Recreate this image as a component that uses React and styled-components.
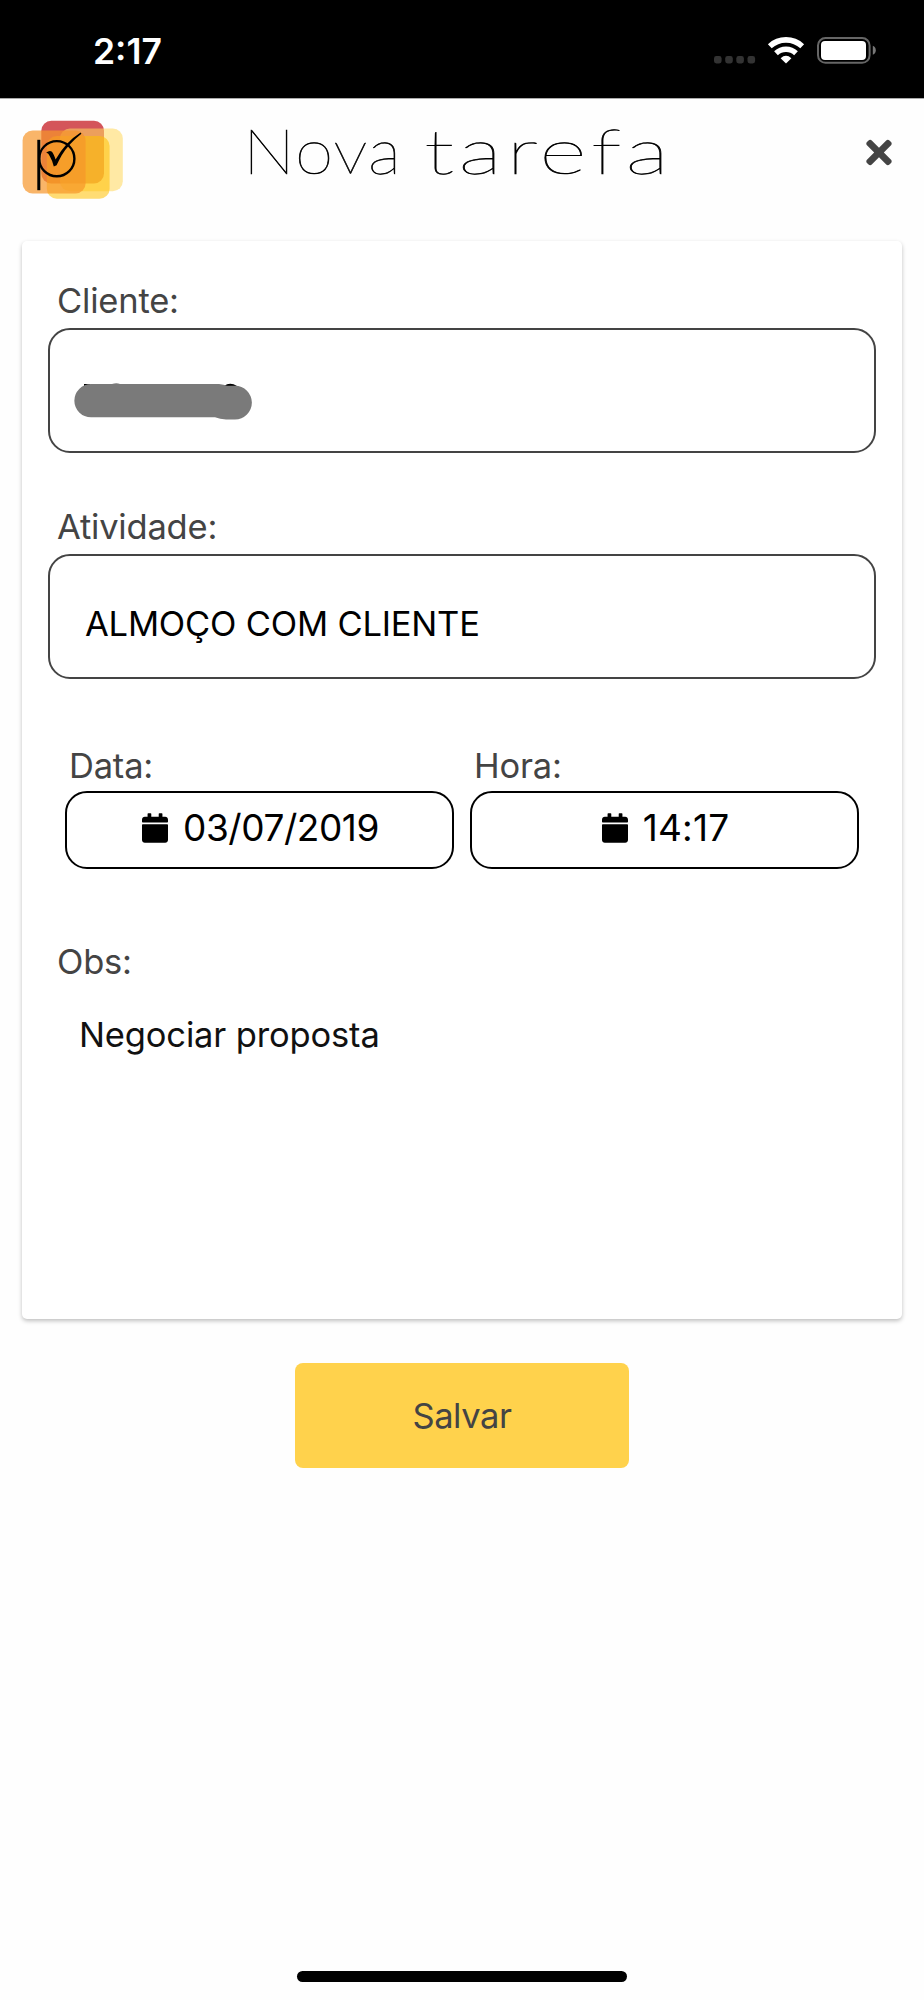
import React from 'react';
import styled, { createGlobalStyle } from 'styled-components';
import { FaCalendar, FaTimes } from 'react-icons/fa';

const GREY = '#444444';
const YELLOW = '#ffd24c';

const GlobalStyle = createGlobalStyle`
    * {
        box-sizing: border-box;
    }

    body {
        margin: 0;
        background-color: #fefefe;
        font-family: Inter, 'Liberation Sans', sans-serif;
    }
`;

const Screen = styled.div`
    width: 924px;
    height: 2000px;
    display: flex;
    flex-direction: column;
    overflow: hidden;
`;

const StatusBar = styled.div`
    height: 99px;
    flex-shrink: 0;
    padding: 2px 48px 0 93px;
    display: flex;
    align-items: center;
    justify-content: space-between;
    background-color: #000;
    border-bottom: 1px solid #aaa;
`;

const Clock = styled.span`
    margin-top: 3px;
    color: #fff;
    font-size: 35.5px;
    font-weight: 600;
    line-height: 42px;
`;

const Header = styled.header`
    height: 142px;
    flex-shrink: 0;
    padding: 21px 31px 0 22px;
    display: flex;
    align-items: flex-start;
`;

const Title = styled.h1`
    margin: 0 0 0 119px;
    display: flex;
    color: #000;
    font-family: Lato, Inter, sans-serif;
    font-size: 62px;
    font-weight: 100;
    line-height: 60px;
    -webkit-text-stroke: 0.6px #000;
`;

const Word = styled.span`
    width: ${props => props.$width}px;
    letter-spacing: ${props => props.$spacing}px;
    transform: scaleX(${props => props.$stretch});
    transform-origin: left;
`;

const CloseButton = styled.button`
    margin: 14px 0 0 auto;
    padding: 0;
    border: none;
    background: none;
    color: ${GREY};
    line-height: 0;

    svg {
        width: 28px;
        height: 37px;
    }
`;

const Card = styled.main`
    height: 1078px;
    flex-shrink: 0;
    margin: 0 22px;
    padding: 39px 26px 0;
    border-radius: 5px;
    background-color: #fff;
    box-shadow: 0 2px 4px rgba(0, 0, 0, 0.25);
`;

const Label = styled.label`
    display: block;
    padding-left: ${props => props.$indent || 9}px;
    color: ${GREY};
    font-size: 34.5px;
    line-height: 42px;
    letter-spacing: -0.2px;
`;

const Field = styled.div`
    height: 125px;
    margin: 6px 0 53px;
    padding: ${props => props.$pad};
    display: flex;
    align-items: center;
    border: 2px solid ${GREY};
    border-radius: 22px;
    color: #000;
    font-size: 34.5px;
    letter-spacing: -0.2px;
`;

const Row = styled.div`
    margin-top: 66px;
    padding: 0 17px;
    display: grid;
    grid-template-columns: 1fr 1fr;
    gap: 16px;
`;

const Picker = styled.div`
    height: 78px;
    margin-top: 4px;
    padding: 0 0 5px 2px;
    display: flex;
    align-items: center;
    justify-content: center;
    gap: 15px;
    border: 2px solid #000;
    border-radius: 22px;
    color: #000;
    font-size: 37px;
    letter-spacing: ${props => props.$spacing || 0}px;

    svg {
        width: 26px;
        height: 30px;
    }
`;

const Notes = styled.div`
    margin-top: 72px;
`;

const NoteText = styled.p`
    margin: 31px 0 0;
    padding-left: 31px;
    color: #111;
    font-size: 34.5px;
    line-height: 42px;
    letter-spacing: -0.15px;
`;

const SaveButton = styled.button`
    width: 334px;
    height: 105px;
    flex-shrink: 0;
    margin: 44px auto 0 295px;
    border: none;
    border-radius: 8px;
    background-color: ${YELLOW};
    color: ${GREY};
    font-family: inherit;
    font-size: 34.5px;
    letter-spacing: -0.4px;
`;

const HomeIndicator = styled.div`
    width: 330px;
    height: 11px;
    margin: auto auto 18px 297px;
    border-radius: 6px;
    background-color: #000;
`;

function StatusIcons() {
    return (
        <svg width="163" height="28" viewBox="713 36 163 28">
            {[714, 725.2, 736.3, 747.5].map(x => (
                <rect key={x} x={x} y="56" width="7.6" height="7.4" rx="2.4" fill="#333" />
            ))}
            <g fill="none" stroke="#fff">
                <path d="M769.8 46.2 A24 24 0 0 1 802.2 46.2" strokeWidth="5.6" />
                <path d="M776 53.2 A14.6 14.6 0 0 1 796 53.2" strokeWidth="5.4" />
            </g>
            <path d="M780.6 58.2 Q786 53.4 791.4 58.2 L786 63.4 Z" fill="#fff" />
            <rect x="818" y="38" width="51.6" height="24.8" rx="7.5" fill="none" stroke="#666" strokeWidth="2" />
            <rect x="821" y="41" width="45" height="19" rx="4" fill="#fff" />
            <path d="M872.8 45.8 Q875.8 47 875.8 50.3 Q875.8 53.6 872.8 54.8 Z" fill="#777" />
        </svg>
    );
}

function Logo() {
    return (
        <svg width="102" height="80" viewBox="22 120 102 80">
            <rect x="41.3" y="120.8" width="62.7" height="62.7" rx="10" fill="#d4555a" />
            <rect x="60" y="128.5" width="62.8" height="62.7" rx="10" fill="#ffd85f" opacity="0.57" />
            <rect x="46.8" y="136" width="62.8" height="62.8" rx="10" fill="#ffbf00" opacity="0.55" />
            <rect x="22.6" y="130.6" width="63" height="62.8" rx="10" fill="#f6962a" opacity="0.7" />
            <path d="M38.8 139.8 V190.2" stroke="#000" strokeWidth="3" />
            <circle cx="56.8" cy="158.7" r="17.6" fill="none" stroke="#000" strokeWidth="2.4" />
            <path
                d="M46.2 152.6 Q49 150.4 51.6 151.4 Q53.4 153 55.6 159.4 Q65.4 142 80.6 132.4 L81.4 133.8 Q68.6 144 61.6 155.4 Q58.8 160.4 56.6 165.2 L53.8 166.4 Q52.4 160.6 49.8 156.2 Q48.6 153.4 46.2 152.6 Z"
                fill="#000"
            />
        </svg>
    );
}

function HiddenName() {
    return (
        <svg width="178" height="38" viewBox="74 383 178 38">
            <path d="M84 386 V384 H90 V386 Z M224 386 Q230 381.6 237 386 Z" fill="#000" />
            <path
                d="M91 384 H112 Q116.5 382.4 120 384 H219 Q224 384.6 227 385.7 H235 A16.9 16.9 0 0 1 235 419.5 H226 Q220 419.3 215 417.3 H91 A16.6 16.6 0 0 1 91 384 Z"
                fill="#7a7a7a"
            />
        </svg>
    );
}

function App() {
    return (
        <Screen>
            <GlobalStyle />
            <StatusBar>
                <Clock>2:17</Clock>
                <StatusIcons />
            </StatusBar>
            <Header>
                <Logo />
                <Title>
                    <Word $width={181} $spacing={1} $stretch={1.12}>
                        Nova
                    </Word>
                    <Word $width={240} $spacing={3} $stretch={1.48}>
                        tarefa
                    </Word>
                </Title>
                <CloseButton aria-label="Fechar">
                    <FaTimes />
                </CloseButton>
            </Header>
            <Card>
                <Label>Cliente:</Label>
                <Field $pad="22px 24px 0">
                    <HiddenName />
                </Field>
                <Label>Atividade:</Label>
                <Field $pad="13px 35px 0">ALMOÇO COM CLIENTE</Field>
                <Row>
                    <div>
                        <Label $indent={4}>Data:</Label>
                        <Picker $spacing={-0.45}>
                            <FaCalendar />
                            03/07/2019
                        </Picker>
                    </div>
                    <div>
                        <Label $indent={4}>Hora:</Label>
                        <Picker $spacing={0.2}>
                            <FaCalendar />
                            14:17
                        </Picker>
                    </div>
                </Row>
                <Notes>
                    <Label>Obs:</Label>
                    <NoteText>Negociar proposta</NoteText>
                </Notes>
            </Card>
            <SaveButton>Salvar</SaveButton>
            <HomeIndicator />
        </Screen>
    );
}

export default App;
